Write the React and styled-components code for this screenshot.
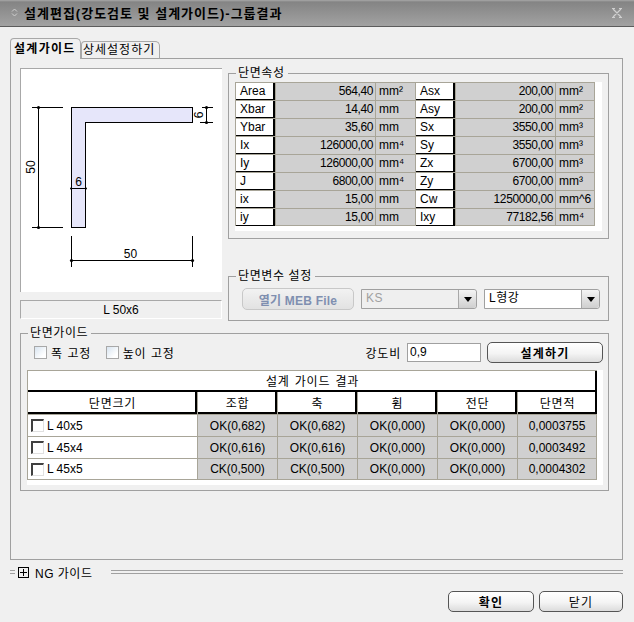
import React from 'react'
import styled, { createGlobalStyle } from 'styled-components'

const GlobalStyle = createGlobalStyle`
  html, body {
    margin: 0;
    padding: 0;
    background: #f0f0f0;
  }
  body, input, button {
    font-family: "Liberation Sans", "Noto Sans CJK KR", sans-serif;
    font-size: 12px;
    color: #000;
  }
  * { box-sizing: border-box; }
`

const props = [
  ['Area', '564,40', 'mm²', 'Asx', '200,00', 'mm²'],
  ['Xbar', '14,40', 'mm', 'Asy', '200,00', 'mm²'],
  ['Ybar', '35,60', 'mm', 'Sx', '3550,00', 'mm³'],
  ['Ix', '126000,00', 'mm⁴', 'Sy', '3550,00', 'mm³'],
  ['Iy', '126000,00', 'mm⁴', 'Zx', '6700,00', 'mm³'],
  ['J', '6800,00', 'mm⁴', 'Zy', '6700,00', 'mm³'],
  ['ix', '15,00', 'mm', 'Cw', '1250000,00', 'mm^6'],
  ['iy', '15,00', 'mm', 'Ixy', '77182,56', 'mm⁴']
]

const guideColumns = ['조합', '축', '휨', '전단', '단면적']

const guideRows = [
  ['L 40x5', 'OK(0,682)', 'OK(0,682)', 'OK(0,000)', 'OK(0,000)', '0,0003755'],
  ['L 45x4', 'OK(0,616)', 'OK(0,616)', 'OK(0,000)', 'OK(0,000)', '0,0003492'],
  ['L 45x5', 'CK(0,500)', 'CK(0,500)', 'OK(0,000)', 'OK(0,000)', '0,0004302']
]

const Dialog = styled.div`
  width: 634px;
  height: 622px;
  background: #f0f0f0;
  overflow: hidden;
`

const TitleBar = styled.div`
  height: 27px;
  display: flex;
  align-items: center;
  padding: 0 12px 1px 10px;
  background: linear-gradient(#a8a8a8 0, #848484 2px, #a2a2a2 100%);
  border-bottom: 1px solid #5c5c5c;
`

const TitleText = styled.div`
  flex: 1;
  margin-left: 5px;
  font-size: 13px;
  font-weight: 700;
  letter-spacing: 1px;
  color: #000;
`

const Body = styled.div`
  padding: 11px 11px 0 10px;
`

const Tabs = styled.div`
  display: flex;
  align-items: flex-end;
  height: 21px;
  position: relative;
  z-index: 1;
`

const Tab = styled.div`
  height: ${p => (p.$active ? '21px' : '18px')};
  width: ${p => (p.$active ? '71px' : '79px')};
  padding-top: ${p => (p.$active ? '3px' : '1px')};
  padding-left: ${p => (p.$active ? '3px' : '1px')};
  line-height: 15px;
  letter-spacing: ${p => (p.$active ? '1.3px' : '1px')};
  font-weight: ${p => (p.$active ? 700 : 400)};
  background: #f0f0f0;
  border: 1px solid #a8a8a8;
  border-bottom: ${p => (p.$active ? 'none' : '1px solid #a0a0a0')};
  border-radius: 4px 5px 0 0;
  white-space: nowrap;
`

const Panel = styled.div`
  height: 502px;
  margin-top: -1px;
  padding: 9px 13px 0 9px;
  border: 1px solid #a0a0a0;
`

const TopRow = styled.div`
  display: grid;
  grid-template-columns: 202px 381px;
  column-gap: 6px;
`

const LeftColumn = styled.div`
  display: flex;
  flex-direction: column;
  gap: 8px;
`

const Preview = styled.div`
  height: 224px;
  background: #fff;
  border-top: 1px solid #a8a8a8;
  border-left: 1px solid #a8a8a8;

  svg { display: block; }
`

const Caption = styled.div`
  height: 19px;
  line-height: 18px;
  text-align: center;
  border: 1px solid #a8a8a8;
  border-right-color: #fff;
  border-bottom-color: #fff;
`

const RightColumn = styled.div`
  display: flex;
  flex-direction: column;
  margin-top: -1px;
`

const Group = styled.fieldset`
  margin: ${p => p.$margin || 0};
  padding: 0;
  height: ${p => p.$height};
  min-width: 0;
  border: 1px solid #a0a0a0;
  border-radius: 0;
`

const GroupTitle = styled.legend`
  margin-left: 7px;
  padding: 0 3px 0 2px;
  line-height: 12px;
  font-size: 12px;
  letter-spacing: 0.6px;
`

const GroupBody = styled.div`
  padding: ${p => p.$padding};
`

const WhiteTable = styled.div`
  background: #fff;
  margin-top: ${p => p.$top || 0};
  padding-bottom: ${p => p.$bottom};
  display: grid;
  grid-template-columns: ${p => p.$columns};
  grid-auto-rows: ${p => p.$rows};
`

const Label = styled.div`
  display: flex;
  align-items: center;
  padding: 0 0 1px 4px;
  background: #fff;
  border-top: 1px solid #a8a598;
  border-left: 1px solid #a8a598;
  box-shadow: inset -2px -1px 0 #000;
  font-size: 12px;
`

const Value = styled.div`
  display: flex;
  align-items: center;
  justify-content: ${p => (p.$unit ? 'flex-start' : 'flex-end')};
  padding: ${p => (p.$unit ? '0 0 1px 3px' : '0 2px 1px 0')};
  background: #d0d0d0;
  border-top: 1px solid #a8a598;
  border-left: 1px solid #a8a598;
  border-right: ${p => (p.$last ? '1px solid #a8a598' : 'none')};
  border-bottom: ${p => (p.$bottom ? '1px solid #a8a598' : 'none')};
  font-size: 12px;
  letter-spacing: ${p => (p.$unit ? 0 : '-0.4px')};
  white-space: nowrap;
`

const ParamRow = styled.div`
  display: flex;
  align-items: center;
`

const OpenButton = styled.button`
  width: 112px;
  height: 22px;
  margin-right: 7px;
  padding: 0;
  background: linear-gradient(#f2f2f2, #e2e2e2);
  border: 1px solid #c8c8c8;
  border-radius: 5px;
  color: #7f8fb0;
  font-weight: 700;
  letter-spacing: 0.2px;
`

const Select = styled.div`
  display: flex;
  width: ${p => p.$width};
  height: 20px;
  margin-right: ${p => p.$gap || 0};
  border: 1px solid #a0a0a0;
  border-radius: 0 3px 3px 0;
  background: ${p => (p.$disabled ? '#efefef' : '#fff')};
  color: ${p => (p.$disabled ? '#a0a0a0' : '#000')};
`

const SelectText = styled.div`
  flex: 1;
  padding-left: 4px;
  line-height: 17px;
  letter-spacing: 0.5px;
`

const SelectArrow = styled.div`
  width: 18px;
  display: flex;
  align-items: center;
  justify-content: center;
  background: linear-gradient(#f4f4f4, #cfcfcf);
  border-left: 1px solid #a8a8a8;
  border-radius: 0 3px 3px 0;

  &::after {
    content: '';
    border-left: 4px solid transparent;
    border-right: 4px solid transparent;
    border-top: 5px solid #000;
  }
`

const OptionRow = styled.div`
  display: flex;
  align-items: center;
  height: 22px;
`

const CheckLabel = styled.label`
  display: flex;
  align-items: center;
  margin-left: ${p => p.$left || 0};
  margin-right: ${p => p.$gap || 0};
  letter-spacing: 0.6px;
  word-spacing: 1px;
  white-space: nowrap;
`

const CheckBox = styled.span`
  width: 13px;
  height: 13px;
  margin-right: 4px;
  border: 1px solid #a8a8a8;
  background: linear-gradient(135deg, #d8e4f0, #ffffff 75%);
`

const RatioLabel = styled.span`
  margin-left: auto;
  margin-right: 6px;
  letter-spacing: 0.8px;
`

const RatioInput = styled.input`
  width: 74px;
  height: 19px;
  padding: 0 0 0 2px;
  margin-right: 6px;
  border: 1px solid #a0a0a0;
  background: #fff;
  outline: none;
`

const Button = styled.button`
  width: ${p => p.$width};
  height: 21px;
  padding: 0;
  background: linear-gradient(#ffffff, #f4f4f4 55%, #dcdcdc);
  border: 1px solid #555;
  border-radius: 5px;
  font-weight: ${p => (p.$bold ? 700 : 400)};
  letter-spacing: 1.2px;
  color: #000;
`

const ResultTitle = styled.div`
  grid-column: 1 / 7;
  display: flex;
  align-items: center;
  justify-content: center;
  background: #fff;
  border-top: 1px solid #a8a598;
  border-left: 1px solid #a8a598;
  box-shadow: inset -2px -2px 0 #000;
  padding-bottom: 2px;
  letter-spacing: 0.8px;
  word-spacing: 1px;
`

const HeadCell = styled.div`
  display: flex;
  align-items: center;
  justify-content: center;
  background: #fff;
  border-left: 1px solid #a8a598;
  box-shadow: inset -2px -2px 0 #000;
  padding-bottom: 2px;
  letter-spacing: 0.8px;
`

const NameCell = styled.div`
  display: flex;
  align-items: center;
  gap: 3px;
  padding-left: 3px;
  background: #fff;
  border-top: 1px solid #a8a598;
  border-left: 1px solid #a8a598;
  border-bottom: ${p => (p.$bottom ? '1px solid #a8a598' : 'none')};
`

const RowCheck = styled.span`
  width: 13px;
  height: 13px;
  border-top: 2px solid #404040;
  border-left: 2px solid #404040;
  border-right: 1px solid #e0e0e0;
  border-bottom: 1px solid #e0e0e0;
`

const ResultCell = styled.div`
  display: flex;
  align-items: center;
  justify-content: center;
  background: #d0d0d0;
  border-top: 1px solid #a8a598;
  border-left: 1px solid #a8a598;
  border-right: ${p => (p.$last ? '1px solid #a8a598' : 'none')};
  border-bottom: ${p => (p.$bottom ? '1px solid #a8a598' : 'none')};
  white-space: nowrap;
`

const NgRow = styled.div`
  display: flex;
  align-items: center;
  height: 14px;
  margin-top: 5px;
`

const DoubleLine = styled.div`
  height: 4px;
  width: ${p => p.$width || 'auto'};
  flex: ${p => (p.$width ? 'none' : 1)};
  border-top: 1px solid #a0a0a0;
  border-bottom: 1px solid #a0a0a0;
`

const Expander = styled.span`
  width: 11px;
  height: 11px;
  margin: 0 6px 0 3px;
  svg { display: block; }
`

const NgText = styled.span`
  width: 76px;
  letter-spacing: 0.5px;
`

const Footer = styled.div`
  display: flex;
  justify-content: flex-end;
  gap: 5px;
  margin-top: 12px;
`

const SectionDrawing = () => (
  <svg width='201' height='223' viewBox='0 0 201 223' fill='none' stroke='#000' strokeWidth='1' shapeRendering='crispEdges'>
    <path d='M50.5 38.5H171.5V53.5H64.5V158.5H50.5Z' fill='#e6e6fa' />
    <path d='M11 38.5H42M11 158.5H42M17.5 38V159' />
    <path d='M181 38.5H192M179 53.5H192M185.5 38V54' />
    <path d='M50 119.5H65' />
    <path d='M50.5 167V198M171.5 167V198M50 191.5H172' />
    <g fill='#000' stroke='none' shapeRendering='auto'>
      <circle cx='17.5' cy='38.5' r='1.6' />
      <circle cx='17.5' cy='158.5' r='1.6' />
      <circle cx='185.5' cy='38.5' r='1.6' />
      <circle cx='185.5' cy='53.5' r='1.6' />
      <circle cx='50.5' cy='191.5' r='1.6' />
      <circle cx='171.5' cy='191.5' r='1.6' />
      <circle cx='50' cy='119.5' r='1' />
      <circle cx='65' cy='119.5' r='1' />
      <text x='57.5' y='117' fontSize='12' textAnchor='middle' fontFamily='Liberation Sans'>6</text>
      <text x='109.5' y='189' fontSize='12' textAnchor='middle' fontFamily='Liberation Sans'>50</text>
      <text transform='translate(14 98) rotate(-90)' fontSize='12' textAnchor='middle' fontFamily='Liberation Sans'>50</text>
      <text transform='translate(182 46) rotate(-90)' fontSize='12' textAnchor='middle' fontFamily='Liberation Sans'>6</text>
    </g>
  </svg>
)

const App = () => (
  <Dialog>
    <GlobalStyle />
    <TitleBar>
      <svg width='9' height='11' viewBox='0 0 9 11' fill='none' stroke='#d0d0d0'>
        <path d='M2 4.5 4.5 2 7 4.5M2 6.5 4.5 9 7 6.5' />
      </svg>
      <TitleText>설계편집(강도검토 및 설계가이드)-그룹결과</TitleText>
      <svg width='10' height='10' viewBox='0 0 10 10' stroke='#d0d0d0' strokeWidth='1.2'>
        <path d='M1 1 9 9M9 1 1 9M0 .5H3M7 .5H10M0 9.5H3M7 9.5H10' />
      </svg>
    </TitleBar>
    <Body>
      <Tabs>
        <Tab $active>설계가이드</Tab>
        <Tab>상세설정하기</Tab>
      </Tabs>
      <Panel>
        <TopRow>
          <LeftColumn>
            <Preview>
              <SectionDrawing />
            </Preview>
            <Caption>L 50x6</Caption>
          </LeftColumn>
          <RightColumn>
            <Group $height='172px'>
              <GroupTitle>단면속성</GroupTitle>
              <GroupBody $padding='3px 6px 0 6px'>
                <WhiteTable $columns='40px 100px 40px 40px 100px 40px 7px' $rows='18px' $bottom='5px'>
                  {props.map((row, i) => (
                    <React.Fragment key={row[0]}>
                      <Label>{row[0]}</Label>
                      <Value $bottom={i === props.length - 1}>{row[1]}</Value>
                      <Value $unit $bottom={i === props.length - 1}>{row[2]}</Value>
                      <Label>{row[3]}</Label>
                      <Value $bottom={i === props.length - 1}>{row[4]}</Value>
                      <Value $unit $last $bottom={i === props.length - 1}>{row[5]}</Value>
                      <span />
                    </React.Fragment>
                  ))}
                </WhiteTable>
              </GroupBody>
            </Group>
            <Group $height='51px' $margin='31px 0 0'>
              <GroupTitle>단면변수 설정</GroupTitle>
              <GroupBody $padding='6px 8px 0 13px'>
                <ParamRow>
                  <OpenButton>열기 MEB File</OpenButton>
                  <Select $width='116px' $gap='7px' $disabled>
                    <SelectText>KS</SelectText>
                    <SelectArrow />
                  </Select>
                  <Select $width='116px'>
                    <SelectText>L형강</SelectText>
                    <SelectArrow />
                  </Select>
                </ParamRow>
              </GroupBody>
            </Group>
          </RightColumn>
        </TopRow>
        <Group $height='164px' $margin='6px 0 0'>
          <GroupTitle>단면가이드</GroupTitle>
          <GroupBody $padding='2px 5px 0 6px'>
            <OptionRow>
              <CheckLabel $left='7px' $gap='15px'><CheckBox />폭 고정</CheckLabel>
              <CheckLabel><CheckBox />높이 고정</CheckLabel>
              <RatioLabel>강도비</RatioLabel>
              <RatioInput defaultValue='0,9' />
              <Button $width='116px' $bold>설계하기</Button>
            </OptionRow>
            <WhiteTable $columns='170px 80px 80px 80px 80px 80px 7px' $rows='22px' $bottom='5px' $top='7px'>
              <ResultTitle>설계 가이드 결과</ResultTitle>
              <span />
              <HeadCell>단면크기</HeadCell>
              {guideColumns.map(name => <HeadCell key={name}>{name}</HeadCell>)}
              <span />
              {guideRows.map((row, i) => (
                <React.Fragment key={row[0]}>
                  <NameCell $bottom={i === guideRows.length - 1}><RowCheck />{row[0]}</NameCell>
                  {row.slice(1).map((val, j) => (
                    <ResultCell key={j} $last={j === 4} $bottom={i === guideRows.length - 1}>{val}</ResultCell>
                  ))}
                  <span />
                </React.Fragment>
              ))}
            </WhiteTable>
          </GroupBody>
        </Group>
      </Panel>
      <NgRow>
        <DoubleLine $width='5px' />
        <Expander>
          <svg width='11' height='11' viewBox='0 0 11 11' fill='none' stroke='#000' shapeRendering='crispEdges'>
            <path d='M.5.5H10.5V10.5H.5ZM5.5 2V9M2 5.5H9' />
          </svg>
        </Expander>
        <NgText>NG 가이드</NgText>
        <DoubleLine />
      </NgRow>
      <Footer>
        <Button $width='86px' $bold>확인</Button>
        <Button $width='84px'>닫기</Button>
      </Footer>
    </Body>
  </Dialog>
)

export default App
